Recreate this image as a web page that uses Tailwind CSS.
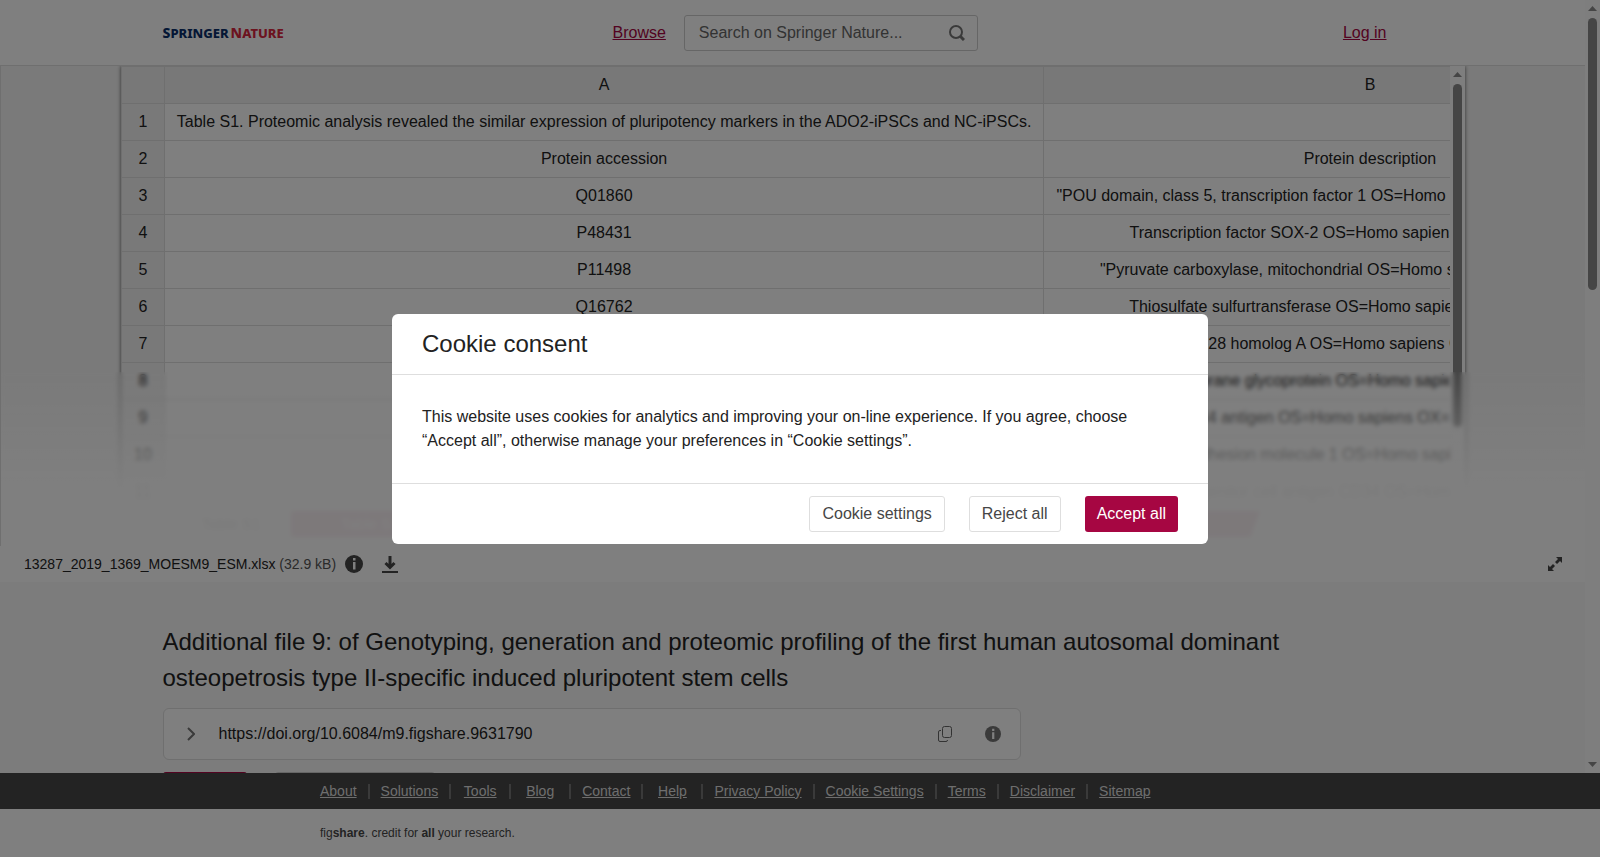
<!DOCTYPE html>
<html lang="en">
    <head>
        <meta charset="UTF-8">
        <meta name="viewport" content="width=device-width, initial-scale=1.0">
        <title>Additional file 9 - Springer Nature</title>
        <script src="https://cdn.jsdelivr.net/npm/@tailwindcss/browser@4"></script>
    </head>
    <body class="h-screen flex flex-col overflow-hidden bg-white font-['Liberation_Sans',Arial,sans-serif] text-base text-[#222]">
        <div class="flex flex-1 min-h-0">
            <div class="flex flex-col flex-1 min-w-0 overflow-hidden">
                <!-- Header -->
                <header class="shrink-0 border-b border-[#dedede]">
                    <div class="max-w-[1260px] h-[65px] mx-auto flex items-center">
                        <a href="#" class="w-[450px] flex gap-[2px] items-baseline font-['Noto_Sans',sans-serif] font-extrabold text-[13px] leading-5">
                            <span class="text-[#0a2f6b]"><span class="text-[14px]">S</span>PRINGER</span>
                            <span class="text-[#d9263f]"><span class="text-[14px]">N</span>ATURE</span>
                        </a>
                        <a href="#" class="text-[#a60642] underline">Browse</a>
                        <form class="ml-[18px] w-[294px] h-9 flex items-center border border-[#ccc] rounded-[3px]">
                            <input type="text" aria-label="Search" placeholder="Search on Springer Nature..." class="flex-1 min-w-0 pl-[14px] outline-none placeholder:text-[#666]">
                            <button type="button" aria-label="Search" class="mr-3">
                                <svg class="w-4 h-4" viewBox="0 0 16 16" fill="none" stroke="#757575" stroke-width="2"><circle cx="7" cy="7" r="6"/><path d="M11 11l4 4" stroke-width="3"/></svg>
                            </button>
                        </form>
                        <a href="#" class="ml-auto mr-9 text-[#a60642] underline">Log in</a>
                    </div>
                </header>

                <!-- File preview -->
                <section class="relative shrink-0 h-[480px] overflow-hidden bg-[#f5f5f5] border-l border-[#dedede]">
                    <div class="px-[120px]">
                        <div class="flex h-[435px] bg-white shadow-[0_0_4px_rgba(0,0,0,0.6)]">
                            <div class="flex-1 min-w-0 overflow-hidden">
                                <table class="border-collapse text-center whitespace-nowrap">
                                    <thead>
                                        <tr class="bg-[#f1f1f1]">
                                            <th class="border border-[#dedede] px-3 py-[6px]"></th>
                                            <th class="border border-[#dedede] px-3 py-[6px] font-normal">A</th>
                                            <th class="border border-[#dedede] px-3 py-[6px] font-normal">B</th>
                                        </tr>
                                    </thead>
                                    <tbody id="rows"></tbody>
                                </table>
                            </div>
                            <div class="w-[15px] flex flex-col items-center bg-[#fcfcfc] pt-[6px]">
                                <svg class="w-[9px] h-[5px] mb-[7px]" viewBox="0 0 9 5"><path d="M0 5L4.500 0L9 5z" fill="#8b8b8b"/></svg>
                                <div class="w-[9px] h-[343px] rounded-full bg-[#8b8b8b]"></div>
                            </div>
                        </div>
                        <div class="flex mt-[10px] px-[50px] text-[15px] leading-[26px]">
                            <button type="button" class="w-[120px]">Table S1</button>
                            <button type="button" class="flex-1 mr-[155px] bg-[#a60642] text-white text-left pl-[50px] [clip-path:polygon(0_0,100%_0,99%_100%,0_100%)]">Table S1</button>
                        </div>
                    </div>
                    <div class="absolute inset-x-0 top-[306px] bottom-0 backdrop-blur-[2px] bg-linear-to-b from-white/0 from-0% via-white/95 via-66% to-white/95 to-100%"></div>
                </section>

                <div class="shrink-0 h-9 flex items-center pl-6 pr-[23px] text-sm bg-white">
                    <p>13287_2019_1369_MOESM9_ESM.xlsx <span class="text-[#555]">(32.9 kB)</span></p>
                    <button type="button" aria-label="File info" class="ml-[9px]">
                        <svg class="w-[18px] h-[18px]" viewBox="0 0 18 18"><circle cx="9" cy="9" r="9" fill="#464646"/><path d="M8 3h2.500v2.500H8zM8 7h2.500v7.500H8z" fill="#fff"/></svg>
                    </button>
                    <button type="button" aria-label="Download" class="ml-[19px]">
                        <svg class="w-4 h-[18px]" viewBox="0 0 16 18" fill="none" stroke="#464646"><path d="M8 1v12M3.500 8L8 12.500L12.500 8" stroke-width="3"/><path d="M0 17h16" stroke-width="2"/></svg>
                    </button>
                    <button type="button" aria-label="Full screen" class="ml-auto">
                        <svg class="w-[14px] h-[14px]" viewBox="0 0 14 14" fill="#464646"><path d="M8 0h6v6l-2-2-3 3-2-2 3-3zM6 14H0V8l2 2 3-3 2 2-3 3z"/></svg>
                    </button>
                </div>

                <!-- Item details -->
                <section class="flex-1 bg-[#f8f8f8]">
                    <div class="max-w-[1260px] mx-auto pt-[42px]">
                        <h1 class="text-2xl leading-9">Additional file 9: of Genotyping, generation and proteomic profiling of the first human autosomal dominant osteopetrosis type II-specific induced pluripotent stem cells</h1>
                        <div class="mt-3 max-w-[858px] h-[52px] flex items-center px-[19px] bg-white border border-[#dedede] rounded-md">
                            <button type="button" aria-label="Expand citation" class="w-9 pl-1">
                                <svg class="w-2 h-[14px]" viewBox="0 0 8 14" fill="none" stroke="#757575" stroke-width="2"><path d="M1 1l6 6-6 6"/></svg>
                            </button>
                            <span>https://doi.org/10.6084/m9.figshare.9631790</span>
                            <button type="button" aria-label="Copy" class="ml-auto">
                                <svg class="w-[14px] h-4" viewBox="0 0 14 16" fill="none" stroke="#666" stroke-width="1"><rect x="4.500" y="0.500" width="9" height="11" rx="2"/><path d="M3 4.500h-1a1.500 1.500 0 0 0-1.500 1.500v8a1.500 1.500 0 0 0 1.500 1.500h6a1.500 1.500 0 0 0 1.500-1.500"/></svg>
                            </button>
                            <button type="button" aria-label="DOI info" class="ml-[33px]">
                                <svg class="w-4 h-4" viewBox="0 0 18 18"><circle cx="9" cy="9" r="9" fill="#757575"/><path d="M8 3h2.500v2.500H8zM8 7h2.500v7.500H8z" fill="#fff"/></svg>
                            </button>
                        </div>
                        <div class="mt-3 flex gap-7">
                            <button type="button" class="w-[84px] h-9 rounded-[3px] bg-[#a60642] text-white">Cite</button>
                            <button type="button" class="w-[160px] h-9 rounded-[3px] border border-[#ccc] bg-white">Download</button>
                        </div>
                    </div>
                </section>
            </div>

            <!-- Page scroll bar -->
            <div class="w-[15px] shrink-0 flex flex-col items-center bg-[#fcfcfc] py-[6px]">
                <svg class="w-[9px] h-[5px] mb-[7px]" viewBox="0 0 9 5"><path d="M0 5L4.500 0L9 5z" fill="#8b8b8b"/></svg>
                <div class="w-[9px] h-[272px] rounded-full bg-[#8b8b8b]"></div>
                <svg class="w-[9px] h-[5px] mt-auto" viewBox="0 0 9 5"><path d="M0 0h9L4.500 5z" fill="#8b8b8b"/></svg>
            </div>
        </div>

        <!-- Footer -->
        <footer>
            <nav class="h-9 flex items-center bg-[#464646] pl-[309px]">
                <ul id="links" class="flex text-sm leading-[15px] text-[#ddd] text-center"></ul>
            </nav>
            <p class="h-12 pl-[320px] text-xs leading-[48px] text-[#464646]">fig<b>share</b>. credit for <b>all</b> your research.</p>
        </footer>

        <!-- Cookie dialog -->
        <div class="fixed inset-0 flex items-center justify-center bg-black/50">
            <div role="dialog" aria-labelledby="cookie-title" class="w-[816px] max-w-full bg-white rounded-md">
                <h2 id="cookie-title" class="px-[30px] py-3 text-2xl leading-9 border-b border-[#dedede]">Cookie consent</h2>
                <p class="p-[30px] leading-6">This website uses cookies for analytics and improving your on-line experience. If you agree, choose “Accept all”, otherwise manage your preferences in “Cookie settings”.</p>
                <div class="flex justify-end gap-6 px-[30px] py-3 border-t border-[#dedede]">
                    <button type="button" class="h-9 px-3 border border-[#dedede] rounded-[3px] text-[#464646]">Cookie settings</button>
                    <button type="button" class="h-9 px-3 border border-[#dedede] rounded-[3px] text-[#464646]">Reject all</button>
                    <button type="button" class="h-9 px-3 rounded-[3px] bg-[#a60642] text-white">Accept all</button>
                </div>
            </div>
        </div>

        <script>
        const rows = [
            ["Table S1. Proteomic analysis revealed the similar expression of pluripotency markers in the ADO2-iPSCs and NC-iPSCs.", ""],
            ["Protein accession", "Protein description"],
            ["Q01860", "\"POU domain, class 5, transcription factor 1 OS=Homo sapiens OX=9606 GN=POU5F1\""],
            ["P48431", "Transcription factor SOX-2 OS=Homo sapiens OX=9606 GN=SOX2"],
            ["P11498", "\"Pyruvate carboxylase, mitochondrial OS=Homo sapiens OX=9606 GN=PC\""],
            ["Q16762", "Thiosulfate sulfurtransferase OS=Homo sapiens OX=9606 GN=TST"],
            ["Q9H9Z2", "Protein lin-28 homolog A OS=Homo sapiens OX=9606 GN=LIN28A"],
            ["P04216", "Thy-1 membrane glycoprotein OS=Homo sapiens OX=9606 GN=THY1"],
            ["P16070", "CD44 antigen OS=Homo sapiens OX=9606 GN=CD44"],
            ["P05362", "Intercellular adhesion molecule 1 OS=Homo sapiens OX=9606 GN=ICAM1"],
            ["P28906", "Hematopoietic progenitor cell antigen CD34 OS=Homo sapiens OX=9606 GN=CD34"]
        ];

        document.getElementById("rows").innerHTML = rows.map((row, i) => `
            <tr>
                <th class="w-[43px] border border-[#dedede] bg-[#f3f3f3] px-3 py-[6px] font-normal">${i + 1}</th>
                <td class="border border-[#dedede] px-3 py-[6px]">${row[0]}</td>
                <td class="border border-[#dedede] px-3 py-[6px]">${row[1]}</td>
            </tr>
        `).join("");

        const links = ["About", "Solutions", "Tools", "Blog", "Contact", "Help", "Privacy Policy", "Cookie Settings", "Terms", "Disclaimer", "Sitemap"];

        document.getElementById("links").innerHTML = links.map(link => `
            <li class="min-w-[60px] px-[11px] border-r-2 border-[#757575] last:border-0"><a href="#" class="underline">${link}</a></li>
        `).join("");
        </script>
    </body>
</html>
